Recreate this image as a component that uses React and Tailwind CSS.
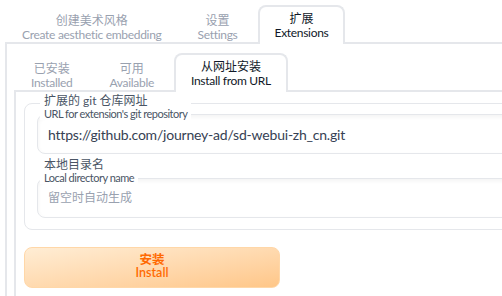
import React from 'react';

const font = { fontFamily: 'Lato, "Noto Sans CJK SC", sans-serif' };

function Tab({ zh, en, active }) {
    return (
        <div
            className={
                'px-[15px] pt-[5px] pb-[4px] text-center leading-[13.5px] rounded-t-lg border-2 border-b-0 -mb-[2px] ' +
                (active ? 'bg-white border-gray-200 text-gray-900 h-[39px]' : 'border-transparent text-gray-400 h-[37px]')
            }
        >
            <div className="text-[12px]">{zh}</div>
            <div className="text-[12px] tracking-[-0.3px]">{en}</div>
        </div>
    );
}

function Field({ zh, en, value, placeholder }) {
    return (
        <div className="flex flex-col">
            <div className="relative z-10 ml-[3px] w-fit bg-white px-1 leading-[13px] text-gray-600">
                <div className="text-[12px]">{zh}</div>
                <div className="text-[11px] tracking-[-0.5px]">{en}</div>
            </div>
            <div className="-mt-[6px] h-[40px] rounded-lg border border-gray-200 shadow-inner flex items-center px-[10px]">
                {value ? (
                    <span className="text-gray-700 text-[14px] tracking-[-0.2px]">{value}</span>
                ) : (
                    <span className="text-gray-400 text-[12px]">{placeholder}</span>
                )}
            </div>
        </div>
    );
}

export default function App() {
    return (
        <div className="w-[502px] h-[296px] overflow-hidden bg-white" style={font}>
            <div className="w-[660px] pl-[5px] pt-[5px]">
                {/* top tabs */}
                <div className="flex items-end gap-[2px]">
                    <Tab zh="创建美术风格" en="Create aesthetic embedding" />
                    <Tab zh="设置" en="Settings" />
                    <div className="ml-[1px]">
                        <Tab zh="扩展" en="Extensions" active />
                    </div>
                </div>
                <div className="border-2 border-gray-200 rounded-b-lg pl-[7px] pt-[9px] h-[300px]">
                    {/* inner tabs */}
                    <div className="flex items-end gap-[3px]">
                        <Tab zh="已安装" en="Installed" />
                        <Tab zh="可用" en="Available" />
                        <Tab zh="从网址安装" en="Install from URL" active />
                    </div>
                    <div className="border-2 border-gray-200 rounded-b-lg pl-[8px] pt-[11px] h-[260px]">
                        <div className="border border-gray-200 rounded-lg pl-[12px] pr-[12px] pb-[11px]">
                            <div className="-mt-[10px] flex flex-col gap-[4px]">
                                <Field
                                    zh="扩展的 git 仓库网址"
                                    en="URL for extension's git repository"
                                    value="https://github.com/journey-ad/sd-webui-zh_cn.git"
                                />
                                <Field zh="本地目录名" en="Local directory name" placeholder="留空时自动生成" />
                            </div>
                        </div>
                        <button className="mt-[17px] w-[256px] h-[41px] pb-[2px] rounded-lg border border-orange-200 bg-gradient-to-br from-orange-100 to-orange-300/80 text-orange-500 font-semibold text-[12.5px] flex flex-col items-center justify-center gap-[1px]">
                            <span className="leading-[12px]">安装</span>
                            <span className="leading-[12px]">Install</span>
                        </button>
                    </div>
                </div>
            </div>
        </div>
    );
}
